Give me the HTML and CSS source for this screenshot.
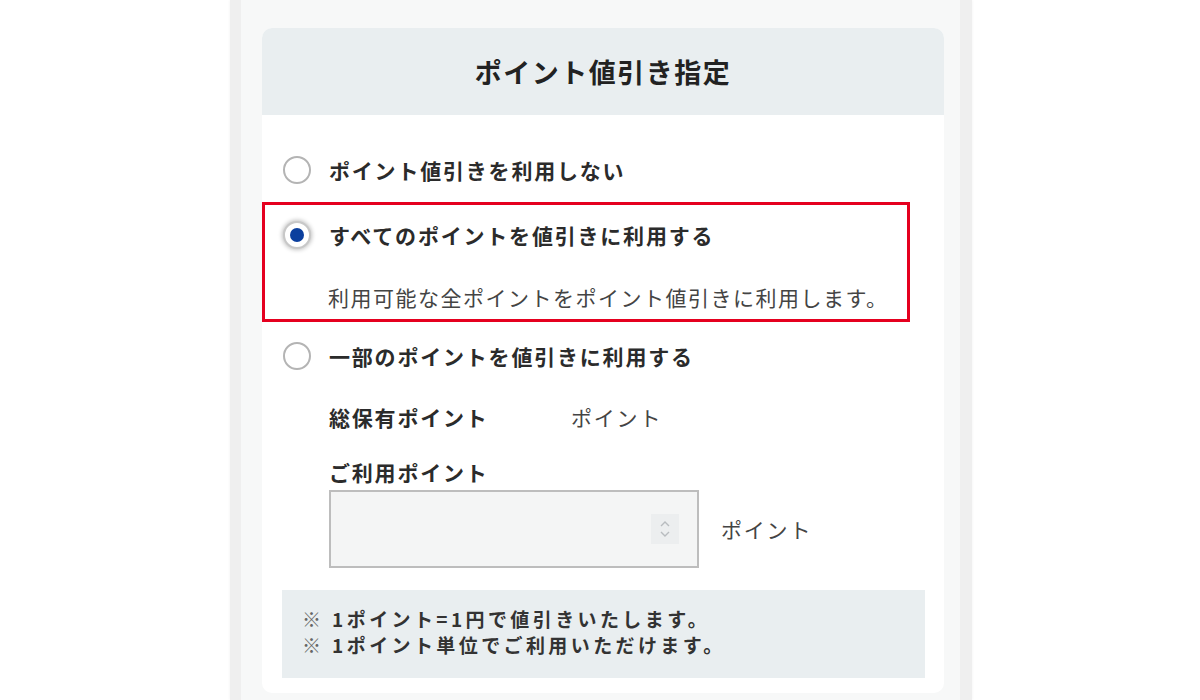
FILE: index.html
```html
<!DOCTYPE html>
<html lang="ja">
<head>
    <meta charset="UTF-8">
    <meta name="viewport" content="width=device-width, initial-scale=1.0">
    <title>ポイント値引き指定</title>
    <link rel="stylesheet" href="styles.css">
</head>
<body>

<div class="frame">
    <div class="card">
        <div class="card-head">
            <h2>ポイント値引き指定</h2>
        </div>
        <div class="card-body">
            <label class="option">
                <span class="radio"></span>
                <span class="option-text">ポイント値引きを利用しない</span>
            </label>

            <div class="highlight">
                <label class="option">
                    <span class="radio checked"></span>
                    <span class="option-text">すべてのポイントを値引きに利用する</span>
                </label>
                <p class="option-desc">利用可能な全ポイントをポイント値引きに利用します。</p>
            </div>

            <label class="option option-last">
                <span class="radio"></span>
                <span class="option-text">一部のポイントを値引きに利用する</span>
            </label>

            <div class="partial">
                <div class="total-row">
                    <span class="total-label">総保有ポイント</span>
                    <span class="unit">ポイント</span>
                </div>
                <div class="use-label">ご利用ポイント</div>
                <div class="use-row">
                    <div class="num-input">
                        <span class="spinner">
                            <svg width="14" height="22" viewBox="0 0 14 22">
                                <path d="M3 8 L7 4 L11 8" fill="none" stroke="#b8bcbf" stroke-width="1.4"/>
                                <path d="M3 14 L7 18 L11 14" fill="none" stroke="#b8bcbf" stroke-width="1.4"/>
                            </svg>
                        </span>
                    </div>
                    <span class="unit">ポイント</span>
                </div>
            </div>

            <div class="notes">
                <p><span class="mark">※</span> 1ポイント=1円で値引きいたします。</p>
                <p><span class="mark">※</span> 1ポイント単位でご利用いただけます。</p>
            </div>
        </div>
    </div>
</div>

</body>
</html>
```

FILE: styles.css
```css
body {
    margin: 0;
    background-color: #fff;
    font-family: "Noto Sans CJK JP", "Noto Sans", sans-serif;
    color: #2b2b2b;
    overflow: hidden;
}

.frame {
    width: 742px;
    min-height: 700px;
    margin-left: 230px;
    padding-top: 28px;
    box-sizing: border-box;
    background-color: #f7f8f8;
    border-left: 11px solid #efefef;
    border-right: 12px solid #efefef;
    box-shadow: 0 0 3px rgba(0, 0, 0, 0.06);
}

.card {
    width: 682px;
    margin-left: 21px;
    background-color: #fff;
    border-radius: 10px;
    overflow: hidden;
}

.card-head {
    height: 87px;
    background-color: #e9eef0;
    display: flex;
    align-items: center;
    justify-content: center;
}

.card-head h2 {
    margin: 0;
    font-size: 27px;
    font-weight: bold;
    letter-spacing: 1.5px;
    color: #222;
}

.card-body {
    padding: 41px 19px 15px 20px;
}

.option {
    display: flex;
    align-items: center;
    height: 28px;
}

.radio {
    width: 24px;
    height: 24px;
    margin-left: 1px;
    margin-right: 18px;
    border: 2px solid #b4b4b4;
    border-radius: 50%;
    background-color: #fff;
    flex-shrink: 0;
    display: flex;
    align-items: center;
    justify-content: center;
}

.radio.checked {
    border-color: #c8c8c8;
    box-shadow: 0 0 4px 1px rgba(0, 0, 0, 0.25);
}

.radio.checked::after {
    content: "";
    width: 14px;
    height: 14px;
    border-radius: 50%;
    background-color: #0b3f9e;
}

.option-text {
    font-size: 21px;
    font-weight: bold;
    letter-spacing: 1.8px;
    line-height: 28px;
}

.highlight {
    width: 648px;
    margin: 18px 0 0 -20px;
    padding: 16px 0 8px 17px;
    border: 3px solid #e5001f;
    box-sizing: border-box;
}

.option-desc {
    margin: 34px 0 0 46px;
    font-size: 21px;
    line-height: 28px;
    letter-spacing: 1.5px;
    color: #444;
}

.option-last {
    margin-top: 20px;
}

.partial {
    padding-left: 47px;
    font-size: 21px;
    letter-spacing: 1.8px;
}

.total-row {
    display: flex;
    align-items: center;
    height: 28px;
    margin-top: 33px;
}

.total-label {
    width: 242px;
    font-weight: bold;
}

.unit {
    color: #444;
}

.use-label {
    margin-top: 27px;
    height: 28px;
    line-height: 28px;
    font-weight: bold;
}

.use-row {
    display: flex;
    align-items: center;
    gap: 22px;
    margin-top: 4px;
}

.num-input {
    width: 370px;
    height: 78px;
    box-sizing: border-box;
    border: 2px solid #bdbdbd;
    background-color: #f4f5f5;
    display: flex;
    align-items: center;
    justify-content: flex-end;
    padding-right: 18px;
}

.spinner {
    width: 28px;
    height: 30px;
    background-color: #eceeef;
    display: flex;
    align-items: center;
    justify-content: center;
}

.notes {
    margin-top: 22px;
    padding: 16px 20px 20px;
    background-color: #e9eef0;
}

.notes p {
    margin: 0;
    font-size: 19px;
    line-height: 26px;
    font-weight: bold;
    letter-spacing: 3.4px;
    color: #333;
}

.notes .mark {
    font-weight: normal;
    color: #666;
}
```
